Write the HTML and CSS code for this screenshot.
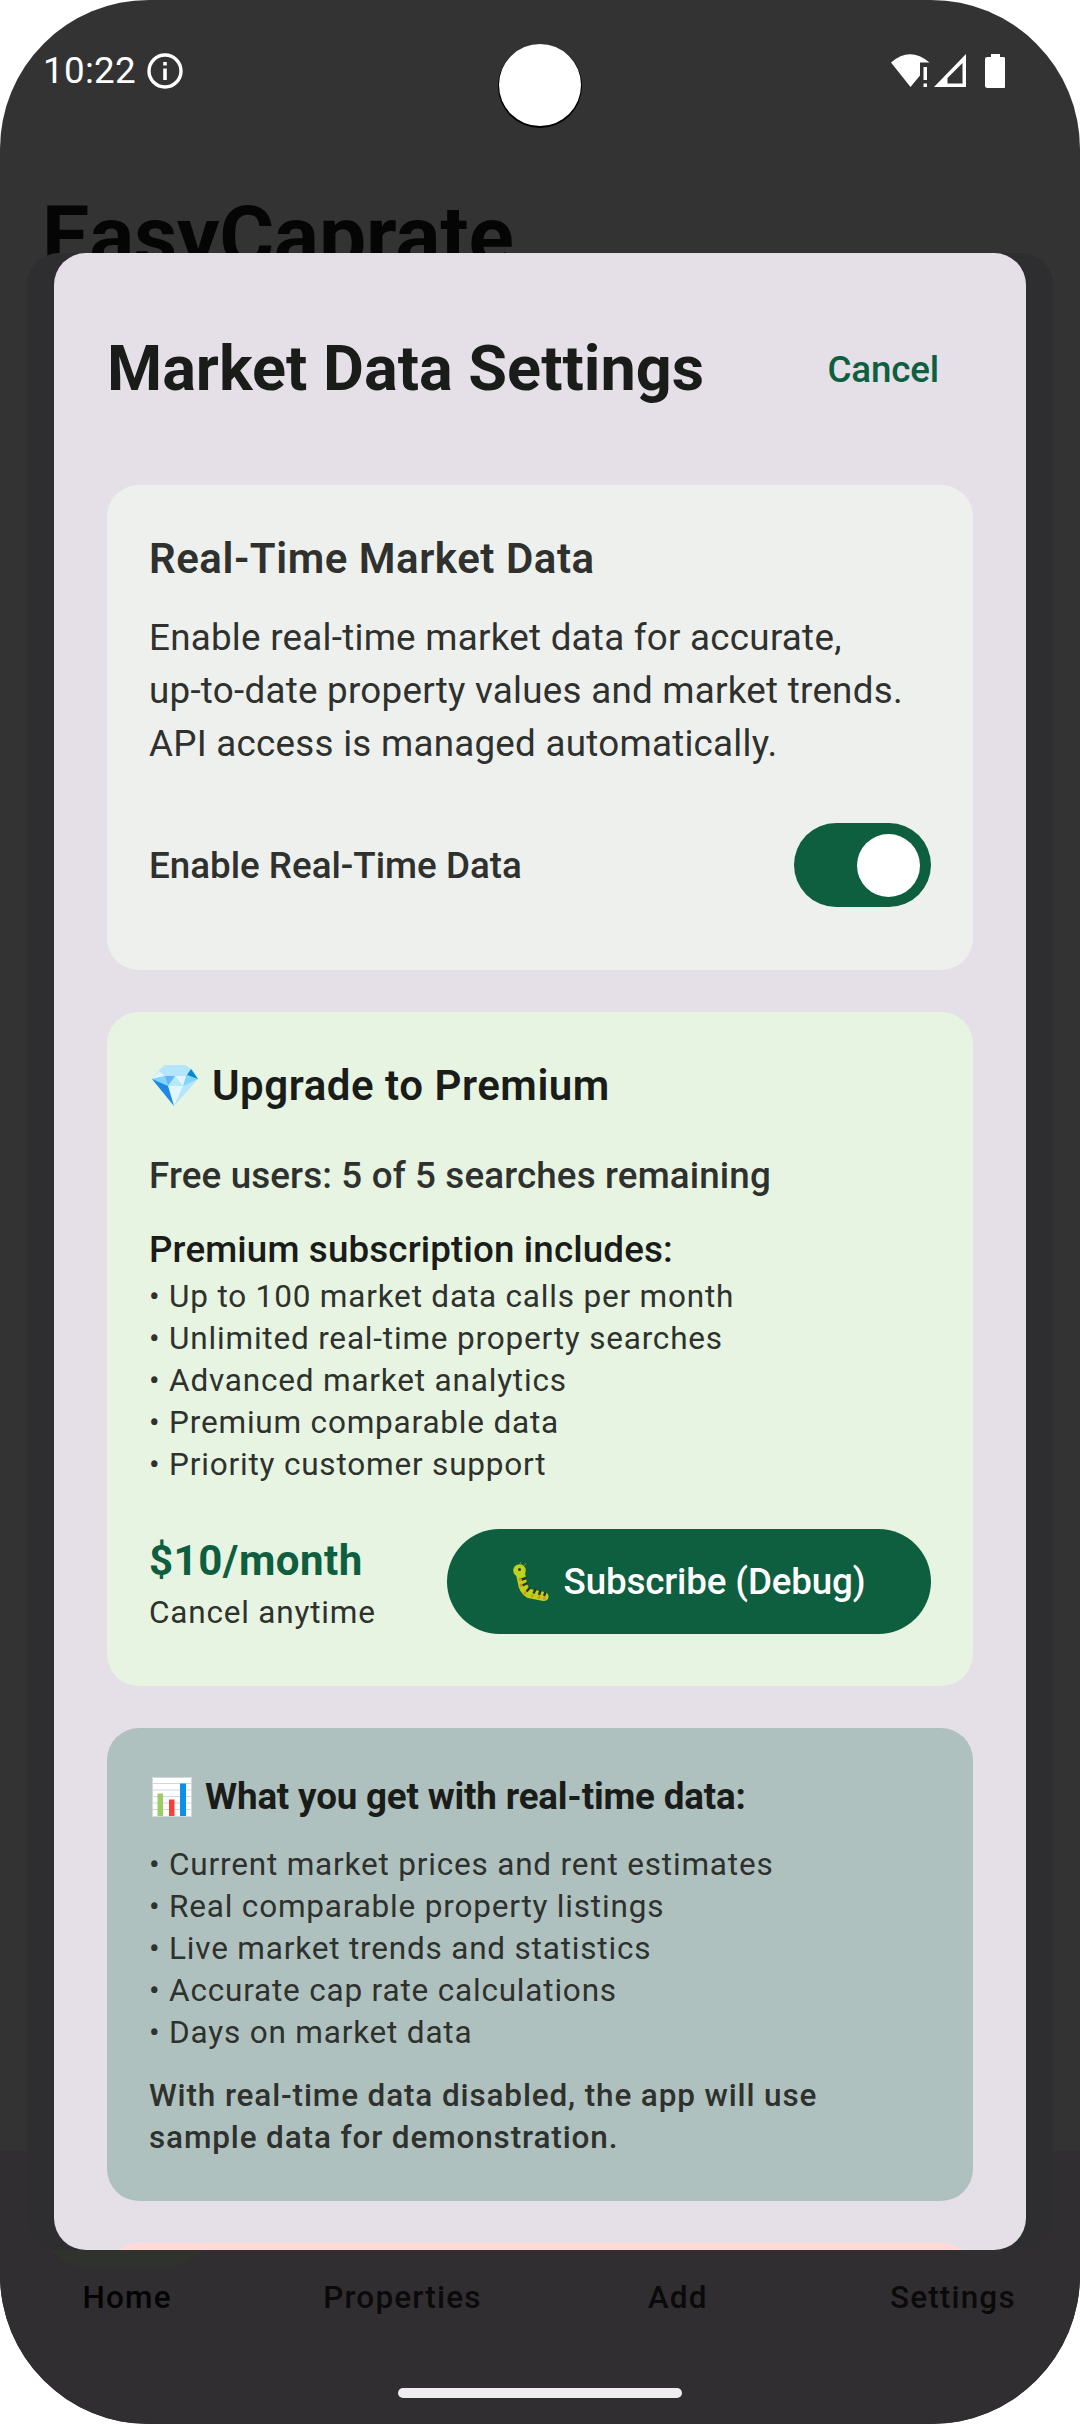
FILE: index.html
```html
<!DOCTYPE html>
<html lang="en">
<head>
<meta charset="utf-8">
<title>Market Data Settings</title>
<link rel="stylesheet" href="styles.css">
</head>
<body>
<div class="device">
  <header class="status">
    <span class="clock">10:22</span>
    <svg class="info" viewBox="0 0 36 36"><circle cx="18" cy="18" r="16" fill="none" stroke="#fff" stroke-width="3.4"/><path d="M16.2 9h3.6v3.6h-3.6zM16.2 15.5h3.6V27h-3.6z" fill="#fff"/></svg>
    <svg class="signals" viewBox="0 0 114 34"><path d="M0 8.500Q19 -8 38.500 8.500H29V21.500L19.500 33z"/><path d="M32.500 13h3.500v13h-3.500zM32.500 29.500h3.500v3.500h-3.500z"/><path fill-rule="evenodd" d="M43 33L75 0V33zM56.500 29.500H71.500V9L56.500 24z"/><path d="M100 0h9v3h3q2.500 0 2.500 2v27q0 2-2.500 2H96.500q-2.500 0-2.500-2V5q0-2 2.500-2h3.500z"/></svg>
  </header>
  <div class="camera"></div>
  <h1 class="app-title">EasyCaprate</h1>
  <nav class="nav">
    <span class="tab tab-active">Home</span><span class="tab">Properties</span><span class="tab">Add</span><span class="tab">Settings</span>
  </nav>
  <div class="back-card"></div>
  <div class="home-bar"></div>
  <section class="dialog">
    <div class="dialog-head"><h2>Market Data Settings</h2><span class="cancel">Cancel</span></div>
    <div class="cards">
      <article class="card realtime">
        <h3>Real-Time Market Data</h3>
        <p class="body">Enable real-time market data for accurate,<br>up-to-date property values and market trends.<br>API access is managed automatically.</p>
        <div class="toggle-row"><span class="label toggle-label">Enable Real-Time Data</span><span class="switch"><span class="thumb"></span></span></div>
      </article>
      <article class="card premium">
        <h3><svg class="gem" viewBox="0 0 46 41"><path fill="#b3e5fc" d="M13 0H33L41 5 46 14 22 41 0 14 7 5z"/><path fill="#e1f5fe" d="M7 6L13 11 0 14zM16 21L31 21 22 41z"/><path fill="#81d4fa" d="M0 14L13 11 16 21zM34 10L46 14 31 21z"/><path fill="#64b5f6" d="M13 11H23L16 21z"/><path fill="#e1f5fe" d="M23 11H34L31 21z"/><path fill="#b2ebf2" d="M23 12L31 21H16z"/><path fill="#1e88e5" d="M0 14L16 21 22 41z"/><path fill="#0288d1" d="M39 4L46 14 35 10z"/></svg>Upgrade to Premium</h3>
        <p class="label free">Free users: 5 of 5 searches remaining</p>
        <p class="label dark">Premium subscription includes:</p>
        <ul class="list">
          <li>• Up to 100 market data calls per month</li><li>• Unlimited real-time property searches</li><li>• Advanced market analytics</li><li>• Premium comparable data</li><li>• Priority customer support</li>
        </ul>
        <div class="buy">
          <div class="price-col"><p class="price">$10/month</p><p class="small">Cancel anytime</p></div>
          <div class="button"><svg class="bug" viewBox="0 0 36 40"><path fill="none" stroke="#7c8f25" d="M9 4L7 0M11 4L13 1"/><path fill="none" stroke="#b9d31a" stroke-width="9" stroke-linecap="round" stroke-linejoin="round" d="M7 9L9 19Q10 28 16 31.500L31 34.500"/><circle cx="6.500" cy="8.500" r="6.300" fill="#bcd41c"/><path stroke="#2b3320" stroke-width="2.400" fill="none" d="M8.500 17.500l5-1.500M9.500 23.500l5-2.500M13.500 29.500l3.500-4M20.500 31.500l2-4.500M26 33l1.500-4.500M31 34l1.500-4"/><g fill="#f4811f"><circle cx="7" cy="17.500" r="1.400"/><circle cx="8" cy="23.500" r="1.400"/><circle cx="12" cy="31" r="1.400"/><circle cx="19.300" cy="34" r="1.400"/><circle cx="26" cy="35.500" r="1.400"/><circle cx="31.300" cy="36.500" r="1.400"/></g><circle cx="6.500" cy="7.500" r="1.500" fill="#333"/></svg>Subscribe (Debug)</div>
        </div>
      </article>
      <article class="card benefits">
        <h4><svg class="chart" viewBox="0 0 40 40"><path fill="#fff" d="M0 0h40v40H0z"/><path stroke="#cfd8dc" fill="none" d="M.5 .5h39v39h-39zM0 6.500h40M0 13h40M0 19.500h40M0 26h40M0 32.500h40"/><path fill="#9ccc65" d="M5.500 16.500h5.500v22.500H5.500z"/><path fill="#f44336" d="M17 22.500h5.500v16.500h-5.500z"/><path fill="#0d8fea" d="M28 6.500h6v32.500h-6z"/></svg>What you get with real-time data:</h4>
        <ul class="list">
          <li>• Current market prices and rent estimates</li><li>• Real comparable property listings</li><li>• Live market trends and statistics</li><li>• Accurate cap rate calculations</li><li>• Days on market data</li>
        </ul>
        <p class="note">With real-time data disabled, the app will use<br>sample data for demonstration.</p>
      </article>
      <article class="card warning"></article>
    </div>
  </section>
</div>
</body>
</html>
```
FILE: styles.css
```css
* { box-sizing: border-box; margin: 0; padding: 0; }
body { background: #fff; font-family: Roboto, sans-serif; color: #2e312d; }
.device { position: relative; width: 1080px; height: 2424px; background: #333; border-radius: 149px; overflow: hidden; }
.status { display: flex; align-items: center; height: 142px; padding: 0 75px 0 43px; color: #fff; }
.clock { font-size: 36.75px; line-height: 42px; letter-spacing: .3px; }
.info { width: 36px; height: 36px; margin-left: 11px; }
.signals { width: 114px; height: 34px; margin-left: auto; fill: #fff; }
.camera { position: absolute; left: 499px; top: 44px; width: 82px; height: 82px; border-radius: 50%; background: #fff; box-shadow: 0 1px 0 1px #000; }
.app-title { padding-left: 42px; margin-top: 45px; font-size: 84px; line-height: 100px; letter-spacing: -.1px; color: #050505; }
.nav { position: absolute; inset: 2151px 0 0; background: #312e31; display: grid; grid-template-columns: repeat(4, 1fr); column-gap: 21px; justify-items: center; padding-top: 126px; }
.tab { position: relative; height: 42px; font-size: 31.5px; line-height: 42px; font-weight: 500; letter-spacing: 1.15px; color: #0b0a0b; }
.tab-active { color: #040404; }
.tab-active::before { content: ""; position: absolute; left: 50%; top: -94px; width: 168px; height: 84px; margin-left: -84px; border-radius: 42px; background: #30322d; }
.back-card { position: absolute; left: 27px; top: 253px; width: 1026px; height: 1997px; border-radius: 32px; background: #2e2e30; }
.home-bar { position: absolute; left: 398px; top: 2388px; width: 284px; height: 10px; border-radius: 5px; background: #eee; }
.dialog { position: absolute; left: 54px; top: 253px; width: 972px; height: 1997px; overflow: hidden; border-radius: 32px; background: #e5e0e8; padding: 53px 53px 0; }
.dialog-head { display: flex; justify-content: space-between; align-items: center; height: 126px; padding-right: 34px; }
h2 { font-size: 63px; line-height: 84px; color: #1a1c19; }
.cancel { font-size: 36.75px; font-weight: 500; letter-spacing: -.15px; color: #0e5e40; }
.cards { display: flex; flex-direction: column; gap: 42px; padding-top: 53px; }
.card { border-radius: 32px; padding: 42px; }
.realtime { height: 485px; background: #eef0ed; }
h3 { display: flex; align-items: center; font-size: 42px; line-height: 63px; font-weight: 600; letter-spacing: .54px; }
.body { margin-top: 21px; font-size: 36.75px; line-height: 53px; letter-spacing: .26px; }
.toggle-row { display: flex; justify-content: space-between; align-items: center; height: 84px; margin-top: 53px; }
.label { font-size: 36.75px; line-height: 53px; font-weight: 500; letter-spacing: .14px; }
.toggle-label { letter-spacing: 0; }
.switch { display: flex; justify-content: flex-end; align-items: center; width: 137px; height: 84px; padding-right: 11px; border-radius: 42px; background: #0e5e40; }
.thumb { width: 63px; height: 63px; border-radius: 50%; background: #fff; }
.premium { height: 674px; background: #e7f4e2; }
.premium h3, .dark, h4 { color: #1a1c19; }
.gem { width: 46px; height: 41px; margin: 0 14px 0 3px; }
.free { margin-top: 32px; }
.dark { margin-top: 21px; }
.list { list-style: none; font-size: 31.5px; line-height: 42px; letter-spacing: .81px; }
.buy { display: flex; justify-content: space-between; align-items: center; margin-top: 43px; height: 105px; }
.price { font-size: 42px; line-height: 63px; font-weight: 700; letter-spacing: .5px; color: #0e5e40; }
.small { font-size: 31.5px; line-height: 42px; letter-spacing: .81px; }
.button { display: flex; align-items: center; justify-content: center; width: 484px; height: 105px; border-radius: 53px; background: #0e5e40; color: #fff; font-size: 36.75px; font-weight: 500; letter-spacing: -.15px; }
.bug { width: 36px; height: 40px; margin-right: 15px; }
.benefits { height: 473px; background: #afc1bf; }
h4 { display: flex; align-items: center; font-size: 36.75px; line-height: 53px; letter-spacing: -.18px; }
.chart { width: 40px; height: 40px; margin: 0 13px 0 3px; }
.benefits .list { margin-top: 21px; }
.note { margin-top: 21px; font-size: 31.5px; line-height: 42px; font-weight: 500; letter-spacing: .86px; }
.warning { height: 300px; background: #ffdad6; }
```
